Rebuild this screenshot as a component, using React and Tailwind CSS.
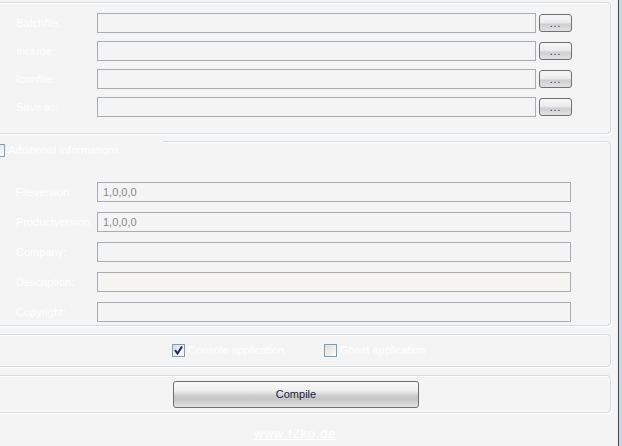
import React from "react";

const font = { fontFamily: '"Liberation Sans", Arial, sans-serif' };

function Box({ className = "", children }) {
  return (
    <div
      className={`relative -ml-[10px] w-[621px] rounded-[4px] border border-[#d3dde3] shadow-[inset_1px_1px_0_#ffffff,1px_1px_0_#ffffff] ${className}`}
    >
      {children}
    </div>
  );
}

function Dots() {
  return (
    <button className="flex h-[18px] w-[33px] items-center justify-center rounded-[3px] border border-[#707070] bg-[linear-gradient(#f7f7f7_0%,#ececec_45%,#cfcfcf_60%,#e2e2e2_100%)] text-[10px] leading-none text-[#1c1c6c]">
      <span className="mt-[2px] tracking-[1px]">...</span>
    </button>
  );
}

function Check({ checked }) {
  return (
    <span className="relative flex h-[13px] w-[13px] shrink-0 items-center justify-center border border-[#7f9db9] bg-[linear-gradient(135deg,#dcdcd7_0%,#f0f0ee_60%,#ffffff_100%)]">
      {checked && (
        <svg width="9" height="9" viewBox="0 0 9 9">
          <path d="M1 4 L3.5 7.5 L8 0.5" fill="none" stroke="#21217a" strokeWidth="2" />
        </svg>
      )}
    </span>
  );
}

export default function App() {
  const top = ["Batchfile:", "Include:", "Iconfile:", "Save as:"];
  const info = [
    ["Fileversion:", "1,0,0,0", "bg-[#f4f4f4]"],
    ["Productversion:", "1,0,0,0", "bg-[#f4f4f4]"],
    ["Company:", "", "bg-[#f4f4f4]"],
    ["Description:", "", "bg-[#f6f4f1]"],
    ["Copyright:", "", "bg-[#f4f4f4]"],
  ];
  return (
    <div className="flex h-[446px] w-[622px] overflow-hidden bg-[#f4f4f4] text-[11px] text-white" style={font}>
      <div className="flex w-[618px] flex-col pt-[2px]">
        <Box className="h-[132px]">
          <div className="flex flex-col gap-[8px] pl-[25px] pt-[10px]">
            {top.map((l) => (
              <div key={l} className="flex h-[20px] items-center">
                <span className="w-[81px]">{l}</span>
                <div className="h-[20px] w-[439px] border border-[#a7adb4] bg-[#f4f4f4]" />
                <div className="ml-[3px]">
                  <Dots />
                </div>
              </div>
            ))}
          </div>
        </Box>
        <Box className="mt-[7px] h-[185px]">
          <div className="absolute -left-[1px] -top-[2px] flex h-[20px] w-[173px] items-center bg-[#f4f4f4]">
            <span className="ml-[2px]">
              <Check />
            </span>
            <span className="ml-[3px] text-[11px]">Additional informations</span>
          </div>
          <div className="flex flex-col gap-[10px] pl-[25px] pt-[40px]">
            {info.map(([l, v, bg]) => (
              <div key={l} className="flex h-[20px] items-center">
                <span className="w-[81px] whitespace-nowrap">{l}</span>
                <div className={`flex h-[20px] w-[474px] items-center border border-[#a7adb4] pl-[5px] text-[11px] text-[#8a8a8a] ${bg}`}>
                  {v}
                </div>
              </div>
            ))}
          </div>
        </Box>
        <Box className="mt-[8px] h-[33px]">
          <div className="flex h-full items-center pl-[181px]">
            <Check checked />
            <span className="ml-[3px] w-[136px]">Console application</span>
            <Check />
            <span className="ml-[3px]">Ghost application</span>
          </div>
        </Box>
        <Box className="mt-[8px] h-[38px]">
          <div className="flex h-full items-center pl-[182px]">
            <button className="flex h-[27px] w-[246px] items-center justify-center rounded-[3px] border border-[#6e6e6e] bg-[linear-gradient(#fafafa_0%,#eeeeee_35%,#cdcdcd_55%,#c6c6c6_70%,#e4e4e4_100%)] text-[11px] text-[#1a1a3a]">
              Compile
            </button>
          </div>
        </Box>
        <div className="mt-[11px] flex justify-center pr-[28px]">
          <span className="text-[13px] tracking-[0.8px] underline">www.f2ko.de</span>
        </div>
      </div>
      <div className="w-[1px] bg-[#3c4654]" />
      <div className="w-[3px] bg-[#c9d6e3]" />
    </div>
  );
}
